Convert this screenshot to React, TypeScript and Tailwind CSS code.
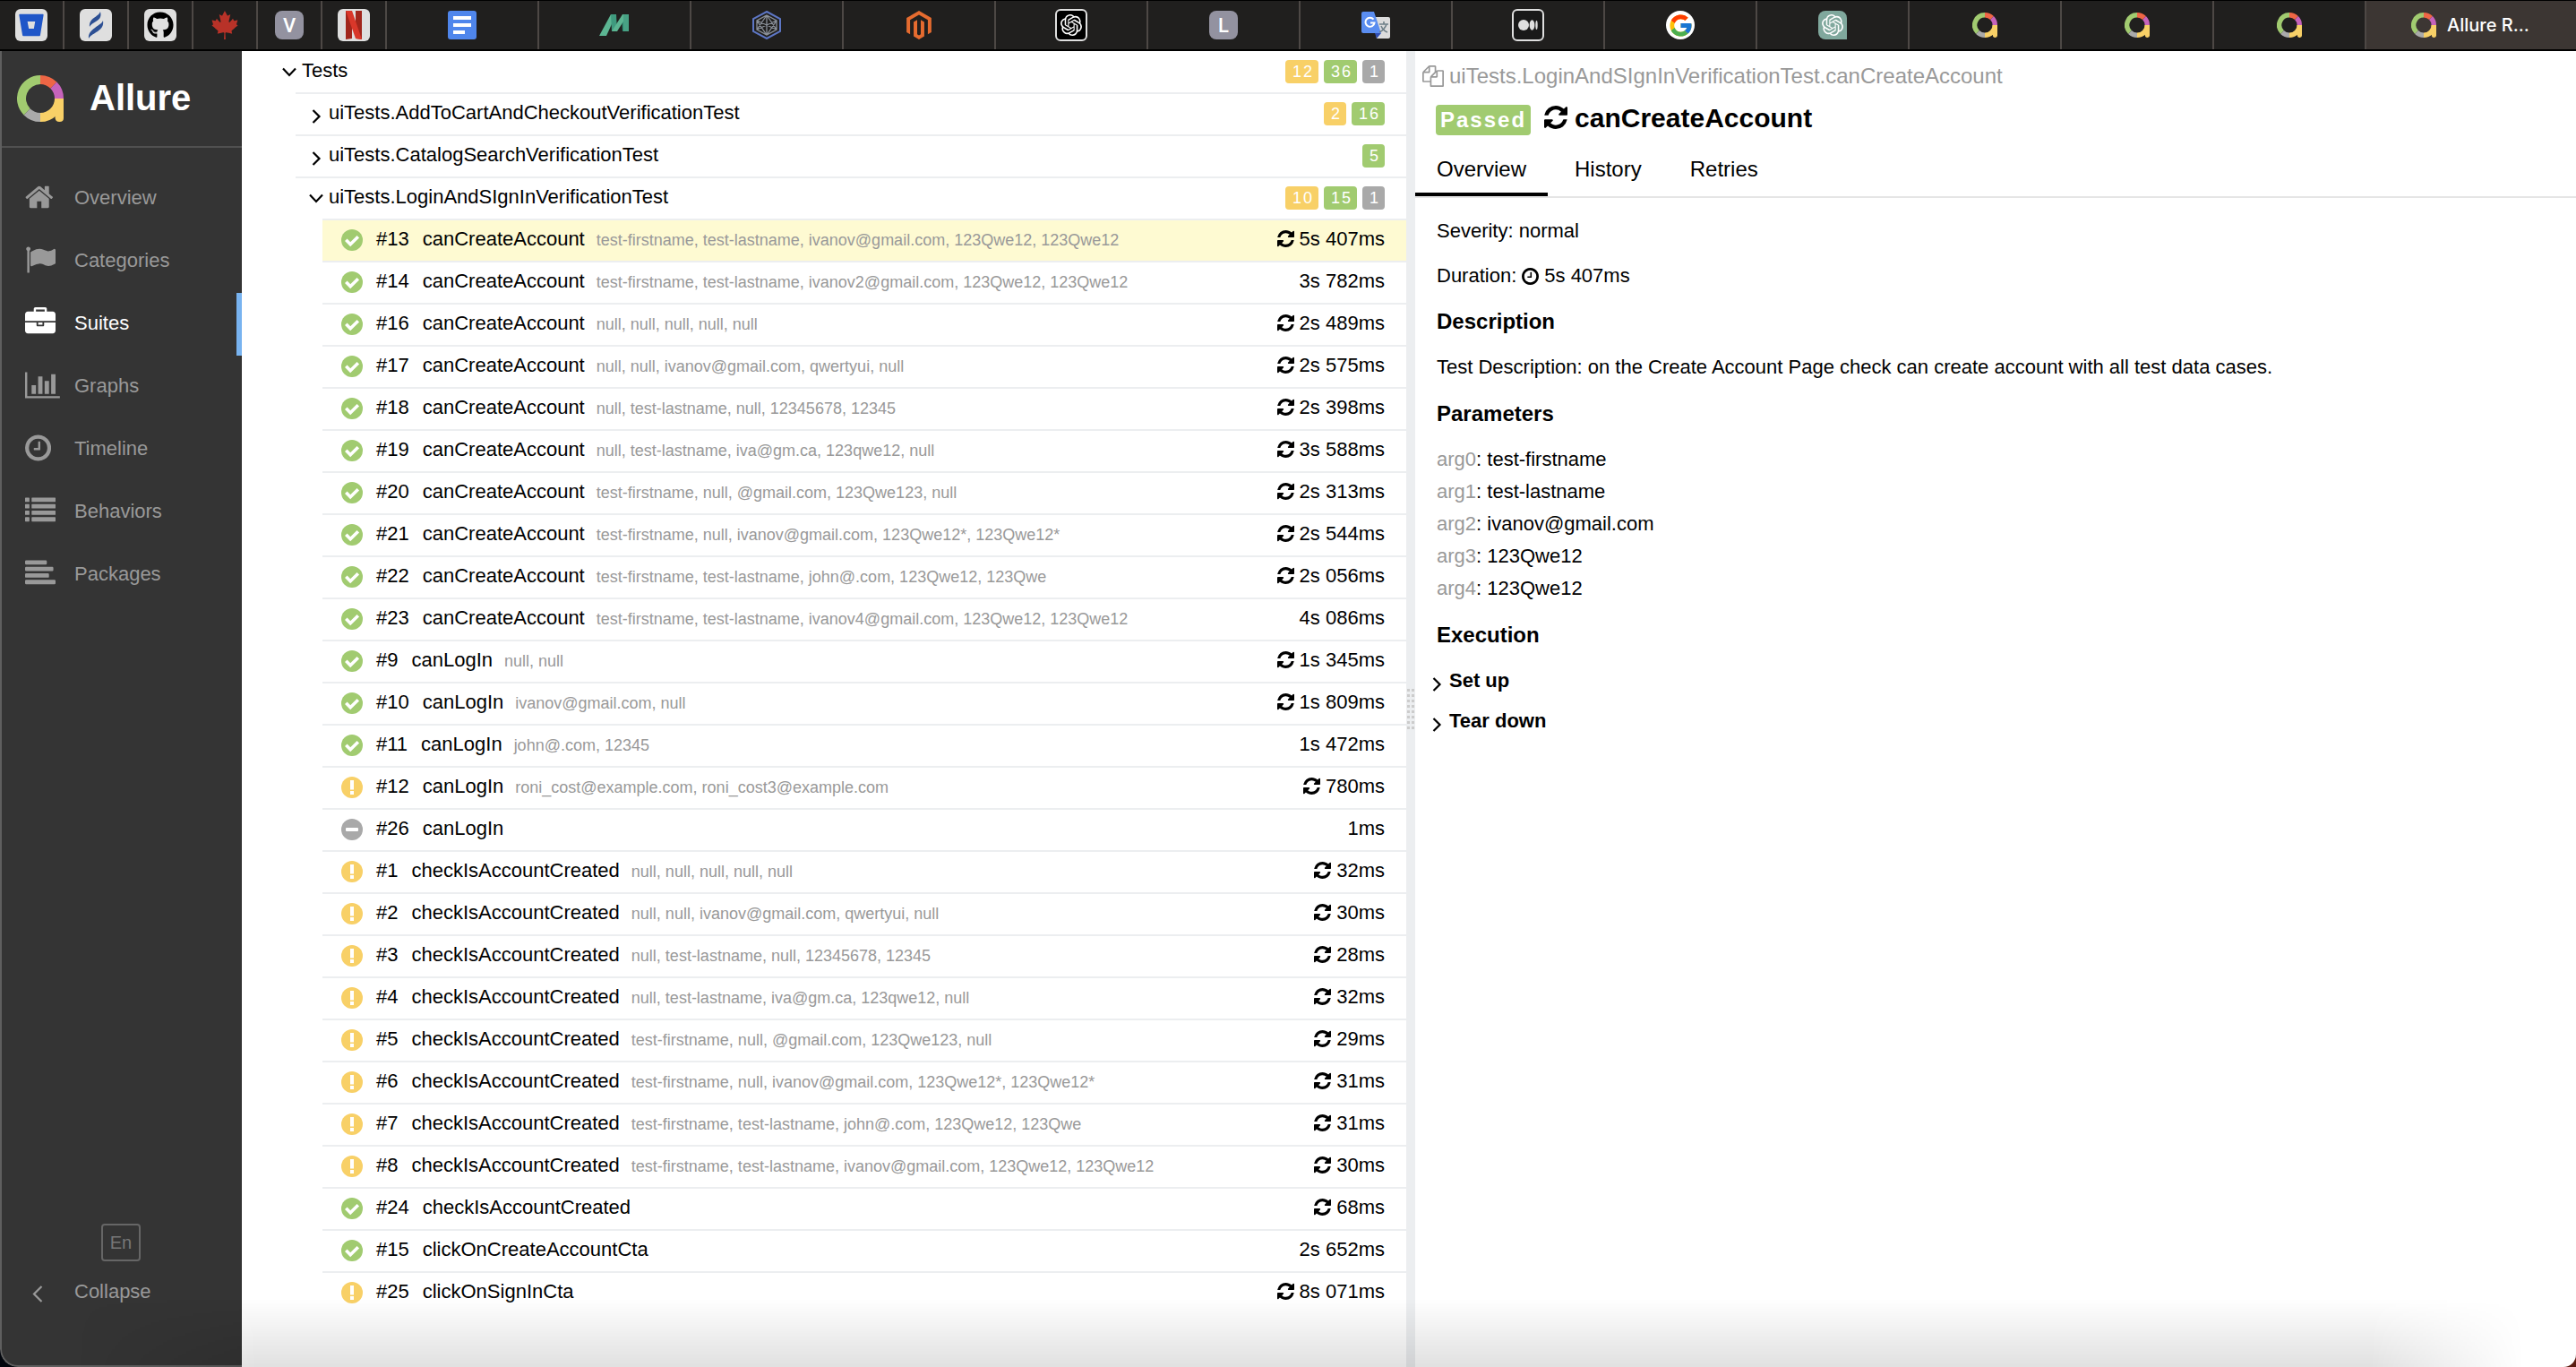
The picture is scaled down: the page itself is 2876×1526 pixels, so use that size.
import React from "react";
import { FaBitbucket, FaCanadianMapleLeaf, FaGithub, FaMagento } from "react-icons/fa";
import { FcGoogle } from "react-icons/fc";
import { SiOpenai } from "react-icons/si";

type Status = "passed" | "broken" | "skipped";
type Test = { id: number; name: string; params?: string; status: Status; time: string; retried?: boolean };

const TESTS: Test[] = [
  { id: 13, name: "canCreateAccount", params: "test-firstname, test-lastname, ivanov@gmail.com, 123Qwe12, 123Qwe12", status: "passed", time: "5s 407ms", retried: true },
  { id: 14, name: "canCreateAccount", params: "test-firstname, test-lastname, ivanov2@gmail.com, 123Qwe12, 123Qwe12", status: "passed", time: "3s 782ms" },
  { id: 16, name: "canCreateAccount", params: "null, null, null, null, null", status: "passed", time: "2s 489ms", retried: true },
  { id: 17, name: "canCreateAccount", params: "null, null, ivanov@gmail.com, qwertyui, null", status: "passed", time: "2s 575ms", retried: true },
  { id: 18, name: "canCreateAccount", params: "null, test-lastname, null, 12345678, 12345", status: "passed", time: "2s 398ms", retried: true },
  { id: 19, name: "canCreateAccount", params: "null, test-lastname, iva@gm.ca, 123qwe12, null", status: "passed", time: "3s 588ms", retried: true },
  { id: 20, name: "canCreateAccount", params: "test-firstname, null, @gmail.com, 123Qwe123, null", status: "passed", time: "2s 313ms", retried: true },
  { id: 21, name: "canCreateAccount", params: "test-firstname, null, ivanov@gmail.com, 123Qwe12*, 123Qwe12*", status: "passed", time: "2s 544ms", retried: true },
  { id: 22, name: "canCreateAccount", params: "test-firstname, test-lastname, john@.com, 123Qwe12, 123Qwe", status: "passed", time: "2s 056ms", retried: true },
  { id: 23, name: "canCreateAccount", params: "test-firstname, test-lastname, ivanov4@gmail.com, 123Qwe12, 123Qwe12", status: "passed", time: "4s 086ms" },
  { id: 9, name: "canLogIn", params: "null, null", status: "passed", time: "1s 345ms", retried: true },
  { id: 10, name: "canLogIn", params: "ivanov@gmail.com, null", status: "passed", time: "1s 809ms", retried: true },
  { id: 11, name: "canLogIn", params: "john@.com, 12345", status: "passed", time: "1s 472ms" },
  { id: 12, name: "canLogIn", params: "roni_cost@example.com, roni_cost3@example.com", status: "broken", time: "780ms", retried: true },
  { id: 26, name: "canLogIn", status: "skipped", time: "1ms" },
  { id: 1, name: "checkIsAccountCreated", params: "null, null, null, null, null", status: "broken", time: "32ms", retried: true },
  { id: 2, name: "checkIsAccountCreated", params: "null, null, ivanov@gmail.com, qwertyui, null", status: "broken", time: "30ms", retried: true },
  { id: 3, name: "checkIsAccountCreated", params: "null, test-lastname, null, 12345678, 12345", status: "broken", time: "28ms", retried: true },
  { id: 4, name: "checkIsAccountCreated", params: "null, test-lastname, iva@gm.ca, 123qwe12, null", status: "broken", time: "32ms", retried: true },
  { id: 5, name: "checkIsAccountCreated", params: "test-firstname, null, @gmail.com, 123Qwe123, null", status: "broken", time: "29ms", retried: true },
  { id: 6, name: "checkIsAccountCreated", params: "test-firstname, null, ivanov@gmail.com, 123Qwe12*, 123Qwe12*", status: "broken", time: "31ms", retried: true },
  { id: 7, name: "checkIsAccountCreated", params: "test-firstname, test-lastname, john@.com, 123Qwe12, 123Qwe", status: "broken", time: "31ms", retried: true },
  { id: 8, name: "checkIsAccountCreated", params: "test-firstname, test-lastname, ivanov@gmail.com, 123Qwe12, 123Qwe12", status: "broken", time: "30ms", retried: true },
  { id: 24, name: "checkIsAccountCreated", status: "passed", time: "68ms", retried: true },
  { id: 15, name: "clickOnCreateAccountCta", status: "passed", time: "2s 652ms" },
  { id: 25, name: "clickOnSignInCta", status: "broken", time: "8s 071ms", retried: true },
];

const PARAMETERS = ["test-firstname", "test-lastname", "ivanov@gmail.com", "123Qwe12", "123Qwe12"];

/* ---------- glyphs ---------- */

function RefreshIcon({ className }: { className: string }) {
  return (
    <svg viewBox="128 128 1536 1536" fill="currentColor" className={className} aria-hidden="true">
      <path d="M1639 1056q0 5-1 7-64 268-268 434.5t-478 166.5q-146 0-282.5-55t-243.5-157l-129 129q-19 19-45 19t-45-19-19-45v-448q0-26 19-45t45-19h448q26 0 45 19t19 45-19 45l-137 137q71 66 161 102t187 36q134 0 250-65t186-179q11-17 53-117 8-23 30-23h192q13 0 22.5 9.5t9.5 22.5zm25-800v448q0 26-19 45t-45 19h-448q-26 0-45-19t-19-45 19-45l138-138q-148-137-349-137-134 0-250 65t-186 179q-11 17-53 117-8 23-30 23h-199q-13 0-22.5-9.5t-9.5-22.5v-7q65-268 270-434.5t480-166.5q146 0 284 55.5t245 156.5l130-129q19-19 45-19t45 19 19 45z" />
    </svg>
  );
}

const CLOCK =
  "M1024 544v448q0 14-9 23t-23 9h-320q-14 0-23-9t-9-23v-64q0-14 9-23t23-9h224v-352q0-14 9-23t23-9h64q14 0 23 9t9 23zm416 352q0-148-73-273t-198-198-273-73-273 73-198 198-73 273 73 273 198 198 273 73 273-73 198-198 73-273zm224 0q0 209-103 385.5t-279.5 279.5-385.5 103-385.5-103-279.5-279.5-103-385.5 103-385.5 279.5-279.5 385.5-103 385.5 103 279.5 279.5 103 385.5z";

const NAV = [
  {
    label: "Overview",
    box: "64 0 1664 1792",
    d: "M1472 992v480q0 26-19 45t-45 19h-384v-384h-256v384h-384q-26 0-45-19t-19-45v-480q0-1 .5-3t.5-3l575-474 575 474q1 2 1 6zm223-69l-62 74q-8 9-21 11h-3q-13 0-21-7l-692-577-692 577q-12 8-24 7-13-2-21-11l-62-74q-8-10-7-23.5t11-21.5l719-599q32-26 76-26t76 26l244 204v-195q0-14 9-23t23-9h192q14 0 23 9t9 23v408l219 182q10 8 11 21.5t-7 23.5z",
  },
  {
    label: "Categories",
    box: "0 0 1792 1792",
    d: "M320 256q0 72-64 110v1266q0 13-9.5 22.5t-22.5 9.5h-64q-13 0-22.5-9.5t-9.5-22.5v-1266q-64-38-64-110 0-53 37.5-90.5t90.5-37.5 90.5 37.5 37.5 90.5zm1472 64v763q0 25-12.5 38.5t-39.5 27.5q-215 116-369 116-61 0-123.5-22t-108.5-48-115.5-48-142.5-22q-192 0-464 146-17 9-33 9-26 0-45-19t-19-45v-742q0-32 31-55 21-14 79-43 236-120 421-120 107 0 200 29t219 88q38 19 88 19 54 0 117.5-21t110-47 88-47 54.5-21q26 0 45 19t19 45z",
  },
  {
    label: "Suites",
    box: "0 0 1792 1792",
    d: "M640 256h512v-128h-512v128zm1152 640v480q0 66-47 113t-113 47h-1472q-66 0-113-47t-47-113v-480h672v160q0 26 19 45t45 19h320q26 0 45-19t19-45v-160h672zm-768 0v128h-256v-128h256zm768-480v384h-1792v-384q0-66 47-113t113-47h352v-160q0-40 28-68t68-28h576q40 0 68 28t28 68v160h352q66 0 113 47t47 113z",
  },
  {
    label: "Graphs",
    box: "0 0 2048 1792",
    d: "M640 896v512h-256v-512h256zm384-512v1024h-256v-1024h256zm1024 1152v128h-2048v-1536h128v1408h1920zm-640-896v768h-256v-768h256zm384-384v1152h-256v-1152h256z",
  },
  { label: "Timeline", box: "128 0 1536 1792", d: CLOCK },
  {
    label: "Behaviors",
    box: "0 0 1792 1792",
    d: "M32 1280h192q32 0 32 32v192q0 32-32 32h-192q-32 0-32-32v-192q0-32 32-32zm0-384h192q32 0 32 32v192q0 32-32 32h-192q-32 0-32-32v-192q0-32 32-32zm0-384h192q32 0 32 32v192q0 32-32 32h-192q-32 0-32-32v-192q0-32 32-32zm0-384h192q32 0 32 32v192q0 32-32 32h-192q-32 0-32-32v-192q0-32 32-32zm384 1152h1344q32 0 32 32v192q0 32-32 32h-1344q-32 0-32-32v-192q0-32 32-32zm0-384h1344q32 0 32 32v192q0 32-32 32h-1344q-32 0-32-32v-192q0-32 32-32zm0-384h1344q32 0 32 32v192q0 32-32 32h-1344q-32 0-32-32v-192q0-32 32-32zm0-384h1344q32 0 32 32v192q0 32-32 32h-1344q-32 0-32-32v-192q0-32 32-32z",
  },
  {
    label: "Packages",
    box: "0 0 1792 1792",
    d: "M64 1280h1664q64 0 64 64v128q0 64-64 64h-1664q-64 0-64-64v-128q0-64 64-64zm0-384h1280q64 0 64 64v128q0 64-64 64h-1280q-64 0-64-64v-128q0-64 64-64zm0-384h1536q64 0 64 64v128q0 64-64 64h-1536q-64 0-64-64v-128q0-64 64-64zm0-384h1152q64 0 64 64v128q0 64-64 64h-1152q-64 0-64-64v-128q0-64 64-64z",
  },
];

function Chevron({ dir, className = "" }: { dir: "down" | "right" | "left"; className?: string }) {
  const d = { down: "M1 3.500 L8 11 L15 3.500", right: "M4.500 1 L11.500 8 L4.500 15", left: "M11.500 0 L3 8.500 L11.500 17" }[dir];
  return (
    <svg viewBox="0 0 16 16" className={`size-4 shrink-0 overflow-visible ${className}`} fill="none" stroke="currentColor" strokeWidth="2.2" aria-hidden="true">
      <path d={d} />
    </svg>
  );
}

function AllureMark({ className }: { className: string }) {
  return (
    <svg viewBox="0 0 52 52" className={className} fill="none" strokeWidth="10" aria-hidden="true">
      <path d="M11.15 40.85 A21 21 0 0 1 26 5" stroke="#a1cb70" />
      <path d="M26 47 A21 21 0 0 1 11.15 40.85" stroke="#aaaaaa" />
      <path d="M26 5 A21 21 0 0 1 40.85 11.15" stroke="#ee6645" />
      <path d="M40.85 11.15 A21 21 0 0 1 47 26" stroke="#c663bb" />
      <path d="M47 26 A21 21 0 0 1 26 47" stroke="#f8d067" />
      <path d="M42 26 H52 V48 Q52 52 47.500 52 Q42.500 52 42.500 47 Z" fill="#f8d067" />
    </svg>
  );
}

function StatusIcon({ status }: { status: Status }) {
  const fill = { passed: "#a1cb70", broken: "#f8d067", skipped: "#a9a9a9" }[status];
  return (
    <svg viewBox="0 0 24 24" className="mb-px size-6 shrink-0" role="img" aria-label={status}>
      <circle cx="12" cy="12" r="12" fill={fill} />
      {status === "passed" && <path d="M5.300 11.800 L10.200 16.700 L18.800 8.300" fill="none" stroke="#fff" strokeWidth="3.600" />}
      {status === "broken" && <path d="M10 4h4v10.500h-4zM10 16h4v4h-4z" fill="#fff" />}
      {status === "skipped" && <rect x="5" y="10" width="14" height="4" rx="1" fill="#fff" />}
    </svg>
  );
}

/* ---------- browser tabs ---------- */

function Tile({ className, children }: { className: string; children: React.ReactNode }) {
  return <span className={`flex items-center justify-center overflow-hidden ${className}`}>{children}</span>;
}

const PINNED: { title: string; icon: React.ReactNode }[] = [
  { title: "Bitbucket", icon: <Tile className="size-9 rounded-md bg-[#dfdfdf]"><FaBitbucket className="size-7 text-[#1f56c8]" /></Tile> },
  {
    title: "Feather",
    icon: (
      <Tile className="size-9 rounded-md bg-[#dfdfdf]">
        <svg viewBox="0 0 36 36" className="size-9" fill="#2c4f93">
          <path d="M23 3 C21 9 10 10 11 20 C15 13 26 14 23 3Z" />
          <path d="M26 13 C24 19 9 22 10 33 C14 26 28 25 26 13Z" />
        </svg>
      </Tile>
    ),
  },
  { title: "GitHub", icon: <Tile className="size-9 rounded-md bg-[#dfdfdf]"><FaGithub className="size-[30px] text-black" /></Tile> },
  { title: "Canada", icon: <FaCanadianMapleLeaf className="size-8 text-[#b83228]" /> },
  { title: "V", icon: <Tile className="size-8 rounded-lg bg-[#9392a0] font-[Roboto] text-[22px] font-medium text-white">V</Tile> },
  {
    title: "Netflix",
    icon: (
      <Tile className="size-9 rounded-md bg-[#dfdfdf]">
        <svg viewBox="0 0 36 36" className="size-9">
          <path d="M9 2h7v31l-7 1zM20 2h7v32l-7-1z" fill="#a1261c" />
          <path d="M9 2h7l11 32-7-1z" fill="#d9372a" />
        </svg>
      </Tile>
    ),
  },
];

const TABS: { title: string; icon: React.ReactNode }[] = [
  {
    title: "Docs",
    icon: (
      <svg viewBox="0 0 32 32" className="size-8">
        <rect width="32" height="32" rx="3" fill="#4f86ec" />
        <path d="M6 6h20v4H6zM6 14h20v4H6zM6 22h13v4H6z" fill="#fff" />
      </svg>
    ),
  },
  {
    title: "Mockaroo",
    icon: (
      <svg viewBox="0 0 34 24" className="h-6 w-[34px]">
        <path d="M25 2 L32 0 V19 H26Z" fill="#2f8a72" />
        <path d="M13 0h6L8 24H0Z" fill="#5cb592" />
        <path d="M13 0h6l1 19h-6z" fill="#3f9a7e" />
        <path d="M26 0h6l-12 19h-6z" fill="#5cb592" />
        <path d="M27 0h6v19h-6z" fill="#48a184" />
      </svg>
    ),
  },
  {
    title: "Hexagon",
    icon: (
      <svg viewBox="0 0 32 32" className="size-8" fill="none">
        <path d="M16 1 L31 9 V23 L16 31 L1 23 V9Z" stroke="#5d76c4" strokeWidth="2" />
        <path d="M16 5 L27 11 V21 L16 27 L5 21 V11ZM16 5 V27M5 11 L27 21M27 11 L5 21M16 5 L5 21M16 5 L27 21M5 11 L16 27 L27 11" stroke="#8a9099" strokeWidth="1.300" />
      </svg>
    ),
  },
  { title: "Magento", icon: <FaMagento className="size-8 text-[#e56b2f]" /> },
  { title: "OpenAI", icon: <Tile className="size-9 rounded-md border-2 border-[#dfdfdf] bg-black"><SiOpenai className="size-6 text-white" /></Tile> },
  { title: "L", icon: <Tile className="size-8 rounded-lg bg-[#9392a0] font-[Roboto] text-[22px] font-medium text-white">L</Tile> },
  {
    title: "Translate",
    icon: (
      <svg viewBox="0 0 32 32" className="size-8">
        <path d="M13 7h17q2 0 2 2v20q0 2-2 2H17z" fill="#dcdcdc" />
        <path d="M2 1h12l8 24H2q-2 0-2-2V3q0-2 2-2z" fill="#5a8df0" />
        <path d="M15 25h7l-5 6z" fill="#2f4fb5" />
        <path d="M20 15h10M25 12v3M28 15q-2 6-8 9M22 17q2 5 7 7" fill="none" stroke="#6f8088" strokeWidth="1.600" />
        <path d="M13.500 9.700 A5 5 0 1 0 14.500 13.500 H10" fill="none" stroke="#fff" strokeWidth="2" />
      </svg>
    ),
  },
  {
    title: "Medium",
    icon: (
      <Tile className="size-9 rounded-md border-2 border-[#dfdfdf] bg-[#191919]">
        <svg viewBox="0 0 22 14" className="h-[14px] w-[22px]" fill="#dfdfdf">
          <ellipse cx="6" cy="7" rx="6" ry="6" />
          <ellipse cx="15.500" cy="7" rx="2.900" ry="5.700" />
          <ellipse cx="20.500" cy="7" rx="1.200" ry="5" />
        </svg>
      </Tile>
    ),
  },
  { title: "Google", icon: <Tile className="size-8 rounded-full bg-white"><FcGoogle className="size-[29px]" /></Tile> },
  { title: "ChatGPT", icon: <Tile className="size-8 rounded-lg rounded-br-none bg-[#80a89d]"><SiOpenai className="size-6 text-white" /></Tile> },
  { title: "Allure Report", icon: <AllureMark className="size-7" /> },
  { title: "Allure Report", icon: <AllureMark className="size-7" /> },
  { title: "Allure Report", icon: <AllureMark className="size-7" /> },
];

function TabStrip() {
  return (
    <header className="flex h-[57px] border-y border-b-2 border-black bg-[#201f1e]" role="tablist" aria-label="Browser tabs">
      {PINNED.map((t) => (
        <button key={t.title} role="tab" aria-label={t.title} className="flex w-[72px] shrink-0 items-center justify-center border-r-2 border-[#4d4845]">
          {t.icon}
        </button>
      ))}
      {TABS.map((t, i) => (
        <button key={i} role="tab" aria-label={t.title} className="flex w-[170px] shrink items-center justify-center border-r-2 border-[#4d4845]">
          {t.icon}
        </button>
      ))}
      <button role="tab" aria-selected="true" className="flex min-w-[200px] flex-1 items-center gap-3 bg-[#3c3633] pl-[50px] font-[Inter] text-[20px] font-medium text-white">
        <AllureMark className="size-7" />
        Allure R...
      </button>
    </header>
  );
}

/* ---------- report ---------- */

function Sidebar() {
  return (
    <aside className="flex w-[270px] shrink-0 flex-col rounded-bl-[20px] border-b-2 border-l-2 border-[#5f5f5f] bg-[#343434] text-[22px] text-[#999]">
      <a href="#" className="flex h-[108px] items-center gap-[29px] border-b-2 border-[#505050] pl-[17px] text-[40px] font-bold text-white">
        <AllureMark className="size-[52px]" />
        <span className="pb-[2px] leading-[48px]">Allure</span>
      </a>
      <nav className="mt-[22px] flex flex-col">
        {NAV.map((n) => {
          const active = n.label === "Suites";
          return (
            <a key={n.label} href="#" className={`flex h-[70px] items-center pb-1 pl-[26px] ${active ? "border-r-[6px] border-[#78b3f0] text-white" : ""}`}>
              <span className="w-[55px]">
                <svg viewBox={n.box} className="h-[34px] w-auto" fill="currentColor" aria-hidden="true">
                  <path d={n.d} />
                </svg>
              </span>
              {n.label}
            </a>
          );
        })}
      </nav>
      <div className="mt-auto flex flex-col pb-[49px]">
        <button className="mr-0.5 h-[42px] w-11 self-center rounded border-2 border-[#666] text-[20px] text-[#777]">En</button>
        <button className="flex h-[67px] items-center pl-[33px]">
          <Chevron dir="left" className="mt-1 mr-8" />
          Collapse
        </button>
      </div>
    </aside>
  );
}

function Counts({ broken, passed, skipped }: { broken?: number; passed?: number; skipped?: number }) {
  const items: [number | undefined, string][] = [
    [broken, "bg-[#f8d067]"],
    [passed, "bg-[#a1cb70]"],
    [skipped, "bg-[#a9a9a9]"],
  ];
  return (
    <span className="mb-px ml-auto flex gap-1.5">
      {items.map(([n, bg]) =>
        n === undefined ? null : (
          <span key={bg} className={`h-[26px] rounded pr-[5px] pl-2 text-[18px] leading-[26px] tracking-[2px] text-white ${bg}`}>
            {n}
          </span>
        ),
      )}
    </span>
  );
}

function GroupRow({ name, open, children }: { name: string; open?: boolean; children: React.ReactNode }) {
  return (
    <button aria-expanded={!!open} className="flex h-[45px] w-full items-center pr-6 pl-[15px] text-left">
      <Chevron dir={open ? "down" : "right"} className={open ? "mr-1.5" : "mt-[5px] mr-1.5"} />
      <span className="pb-1">{name}</span>
      {children}
    </button>
  );
}

function SuiteTree() {
  return (
    <section className="min-w-0 pt-px pl-[30px] text-[22px]">
      <GroupRow name="Tests" open>
        <Counts broken={12} passed={36} skipped={1} />
      </GroupRow>
      <ul className="ml-[30px]">
        <li className="border-t-2 border-[#eceef0]">
          <GroupRow name="uiTests.AddToCartAndCheckoutVerificationTest">
            <Counts broken={2} passed={16} />
          </GroupRow>
        </li>
        <li className="border-t-2 border-[#eceef0]">
          <GroupRow name="uiTests.CatalogSearchVerificationTest">
            <Counts passed={5} />
          </GroupRow>
        </li>
        <li className="border-t-2 border-[#eceef0]">
          <GroupRow name="uiTests.LoginAndSIgnInVerificationTest" open>
            <Counts broken={10} passed={15} skipped={1} />
          </GroupRow>
          <ul className="ml-[30px]">
            {TESTS.map((t) => (
              <li key={t.id} className="border-t-2 border-[#eceef0]">
                <a href="#" className={`flex h-[45px] items-center pr-6 pl-[21px] whitespace-nowrap ${t.id === 13 ? "bg-[#fefad2]" : ""}`}>
                  <StatusIcon status={t.status} />
                  <span className="ml-[15px] flex items-baseline pb-1">
                    <span>#{t.id}</span>
                    <span className="ml-[15px]">{t.name}</span>
                    {t.params && <span className="ml-[13px] text-[18px] text-[#999]">{t.params}</span>}
                  </span>
                  <span className="ml-auto flex items-center gap-1.5 pb-1">
                    {t.retried && <RefreshIcon className="size-[19px]" />}
                    {t.time}
                  </span>
                </a>
              </li>
            ))}
          </ul>
        </li>
      </ul>
    </section>
  );
}

function Splitter() {
  return (
    <div role="separator" aria-orientation="vertical" className="flex items-center justify-center bg-[#eceef0]">
      <div className="grid grid-cols-2 gap-x-[2px] gap-y-[3px]">
        {Array.from({ length: 16 }, (_, i) => (
          <span key={i} className="size-[3px] bg-[#cccccc]" />
        ))}
      </div>
    </div>
  );
}

function Details() {
  return (
    <section className="min-w-0 text-[22px] leading-9">
      <div className="flex items-center gap-1.5 pt-3.5 pl-2 text-[24px] leading-7 text-[#999]">
        <button aria-label="Copy full name">
          <svg viewBox="0 0 1792 1792" className="size-6" fill="currentColor">
            <path d="M1696 384q40 0 68 28t28 68v1216q0 40-28 68t-68 28h-960q-40 0-68-28t-28-68v-288h-544q-40 0-68-28t-28-68v-672q0-40 20-88t48-76l408-408q28-28 76-48t88-20h416q40 0 68 28t28 68v328q68-40 128-40h416zm-544 213l-299 299h299v-299zm-640-384l-299 299h299v-299zm196 647l316-316v-416h-384v416q0 40-28 68t-68 28h-416v640h512v-256q0-40 20-88t48-76zm956 804v-1152h-384v416q0 40-28 68t-68 28h-416v640h896z" />
          </svg>
        </button>
        uiTests.LoginAndSIgnInVerificationTest.canCreateAccount
      </div>
      <h2 className="mt-[18px] flex items-start pl-[23px] text-[30px] leading-[30px] font-bold">
        <span className="rounded bg-[#a1cb70] px-[5px] text-[24px] leading-[34px] tracking-[2px] text-white">Passed</span>
        <RefreshIcon className="mt-px mr-2 ml-[15px] size-[26px]" />
        canCreateAccount
      </h2>
      <nav className="mt-3 flex gap-1.5 border-b-2 border-[#e5e5e5] text-[24px]" role="tablist">
        <button role="tab" aria-selected="true" className="h-14 border-b-4 border-black px-6">Overview</button>
        <button role="tab" className="h-14 border-b-4 border-transparent px-6">History</button>
        <button role="tab" className="h-14 border-b-4 border-transparent px-6">Retries</button>
      </nav>
      <div className="px-6 pt-[19px]">
        <p>Severity: normal</p>
        <p className="mt-3.5 flex items-center gap-1.5">
          Duration:
          <svg viewBox="128 128 1536 1536" className="size-[19px]" fill="currentColor" aria-hidden="true">
            <path d={CLOCK} />
          </svg>
          5s 407ms
        </p>
        <h3 className="mt-[15px] text-[24px] font-bold">Description</h3>
        <p className="mt-[15px]">Test Description: on the Create Account Page check can create account with all test data cases.</p>
        <h3 className="mt-4 text-[24px] font-bold">Parameters</h3>
        <ul className="mt-[15px]">
          {PARAMETERS.map((p, i) => (
            <li key={i}>
              <span className="text-[#999]">arg{i}</span>: {p}
            </li>
          ))}
        </ul>
        <h3 className="mt-4 text-[24px] font-bold">Execution</h3>
        <div className="mt-[15px] -ml-2 flex flex-col items-start gap-[9px] font-bold">
          {["Set up", "Tear down"].map((s) => (
            <button key={s} aria-expanded="false" className="flex items-center">
              <Chevron dir="right" className="mt-2 mr-1.5" />
              {s}
            </button>
          ))}
        </div>
      </div>
    </section>
  );
}

export default function App() {
  return (
    <div className="bg-linear-to-r from-[#02060d] to-[#5a1c10] font-['Liberation_Sans',Arial,sans-serif] text-black">
      <div className="relative flex min-h-screen flex-col overflow-hidden rounded-br-[14px] rounded-bl-[20px]">
        <TabStrip />
        <div className="flex flex-1">
          <Sidebar />
          <main className="grid min-w-0 flex-1 grid-cols-[1300fr_10px_1296fr] bg-white">
            <SuiteTree />
            <Splitter />
            <Details />
          </main>
        </div>
        <div className="pointer-events-none absolute inset-x-0 bottom-0 h-[76px] bg-linear-to-t from-black/12 to-transparent [mask-image:linear-gradient(to_right,transparent_3%,black_10%,black_92%,transparent_98%)]" />
      </div>
    </div>
  );
}
